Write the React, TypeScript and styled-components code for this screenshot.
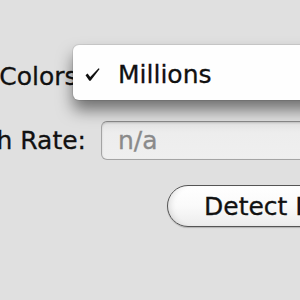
import React from "react";
import styled, { createGlobalStyle } from "styled-components";

const Global = createGlobalStyle`
  html, body { margin: 0; padding: 0; background: #e0e0e0; }
  body { font-family: "DejaVu Sans", "Liberation Sans", sans-serif; }
`;

const Window = styled.div`
  position: relative;
  width: 300px;
  height: 300px;
  overflow: hidden;
  background: #e0e0e0;
  font-size: 25px;
  color: #111;
  -webkit-text-stroke: 0.3px currentColor;
`;

const Form = styled.div`
  display: grid;
  grid-template-columns: 186px 1fr;
  grid-template-rows: 40px 39px 42px;
  column-gap: 15px;
  row-gap: 25px;
  margin-left: -100px;
  padding-top: 56px;
  width: 520px;
`;

const Label = styled.div`
  display: flex;
  align-items: center;
  justify-content: flex-end;
  white-space: nowrap;
`;

const PopupButton = styled.div`
  height: 40px;
  border: 1px solid #8c8c8c;
  border-radius: 6px;
  background: linear-gradient(#ffffff, #ececec);
`;

const TextField = styled.div`
  display: flex;
  align-items: center;
  height: 39px;
  box-sizing: border-box;
  padding-left: 16px;
  border: 1px solid #a4a4a4;
  border-top-color: #8a8a8a;
  border-radius: 6px;
  background: linear-gradient(#e4e4e4, #ededed 30%, #efefef);
  box-shadow: inset 0 1px 2px rgba(0, 0, 0, 0.15);
  color: #8a8a8a;
`;

const ButtonCell = styled.div`
  grid-column: 2;
  display: flex;
  padding-left: 66px;
`;

const PushButton = styled.button`
  height: 42px;
  box-sizing: border-box;
  padding: 0 36px;
  border: 1.5px solid #555;
  border-radius: 21px;
  background: linear-gradient(#ffffff, #fafafa 50%, #ececec);
  box-shadow: 0 1px 1px rgba(0, 0, 0, 0.2), inset 6px 0 6px -4px rgba(0, 0, 0, 0.12);
  font: inherit;
  color: #111;
  white-space: nowrap;
`;

const Menu = styled.div`
  position: absolute;
  top: 45px;
  left: 73px;
  width: 260px;
  height: 55px;
  box-sizing: border-box;
  display: flex;
  align-items: center;
  padding: 4px 0 0 12px;
  border-radius: 6px;
  background: #fefefe;
  box-shadow: 0 0 0 1px rgba(0, 0, 0, 0.08), 0 10px 16px rgba(0, 0, 0, 0.5);
`;

const Check = styled.svg`
  width: 15px;
  height: 13px;
  margin: 0 18px 0 0;
  flex: none;
`;

export default function App() {
  return (
    <>
      <Global />
      <Window>
        <Form>
          <Label>Colors:</Label>
          <PopupButton />
          <Label>Refresh Rate:</Label>
          <TextField>n/a</TextField>
          <ButtonCell>
            <PushButton>Detect Displays</PushButton>
          </ButtonCell>
        </Form>
        <Menu>
          <Check viewBox="0 0 15 13">
            <path d="M0.5 7.2 L2.6 5.6 L5.2 9 L13.6 0.3 L14.6 1 L5.6 12.8 L4.3 12.8 Z" fill="#111" />
          </Check>
          <span>Millions</span>
        </Menu>
      </Window>
    </>
  );
}
